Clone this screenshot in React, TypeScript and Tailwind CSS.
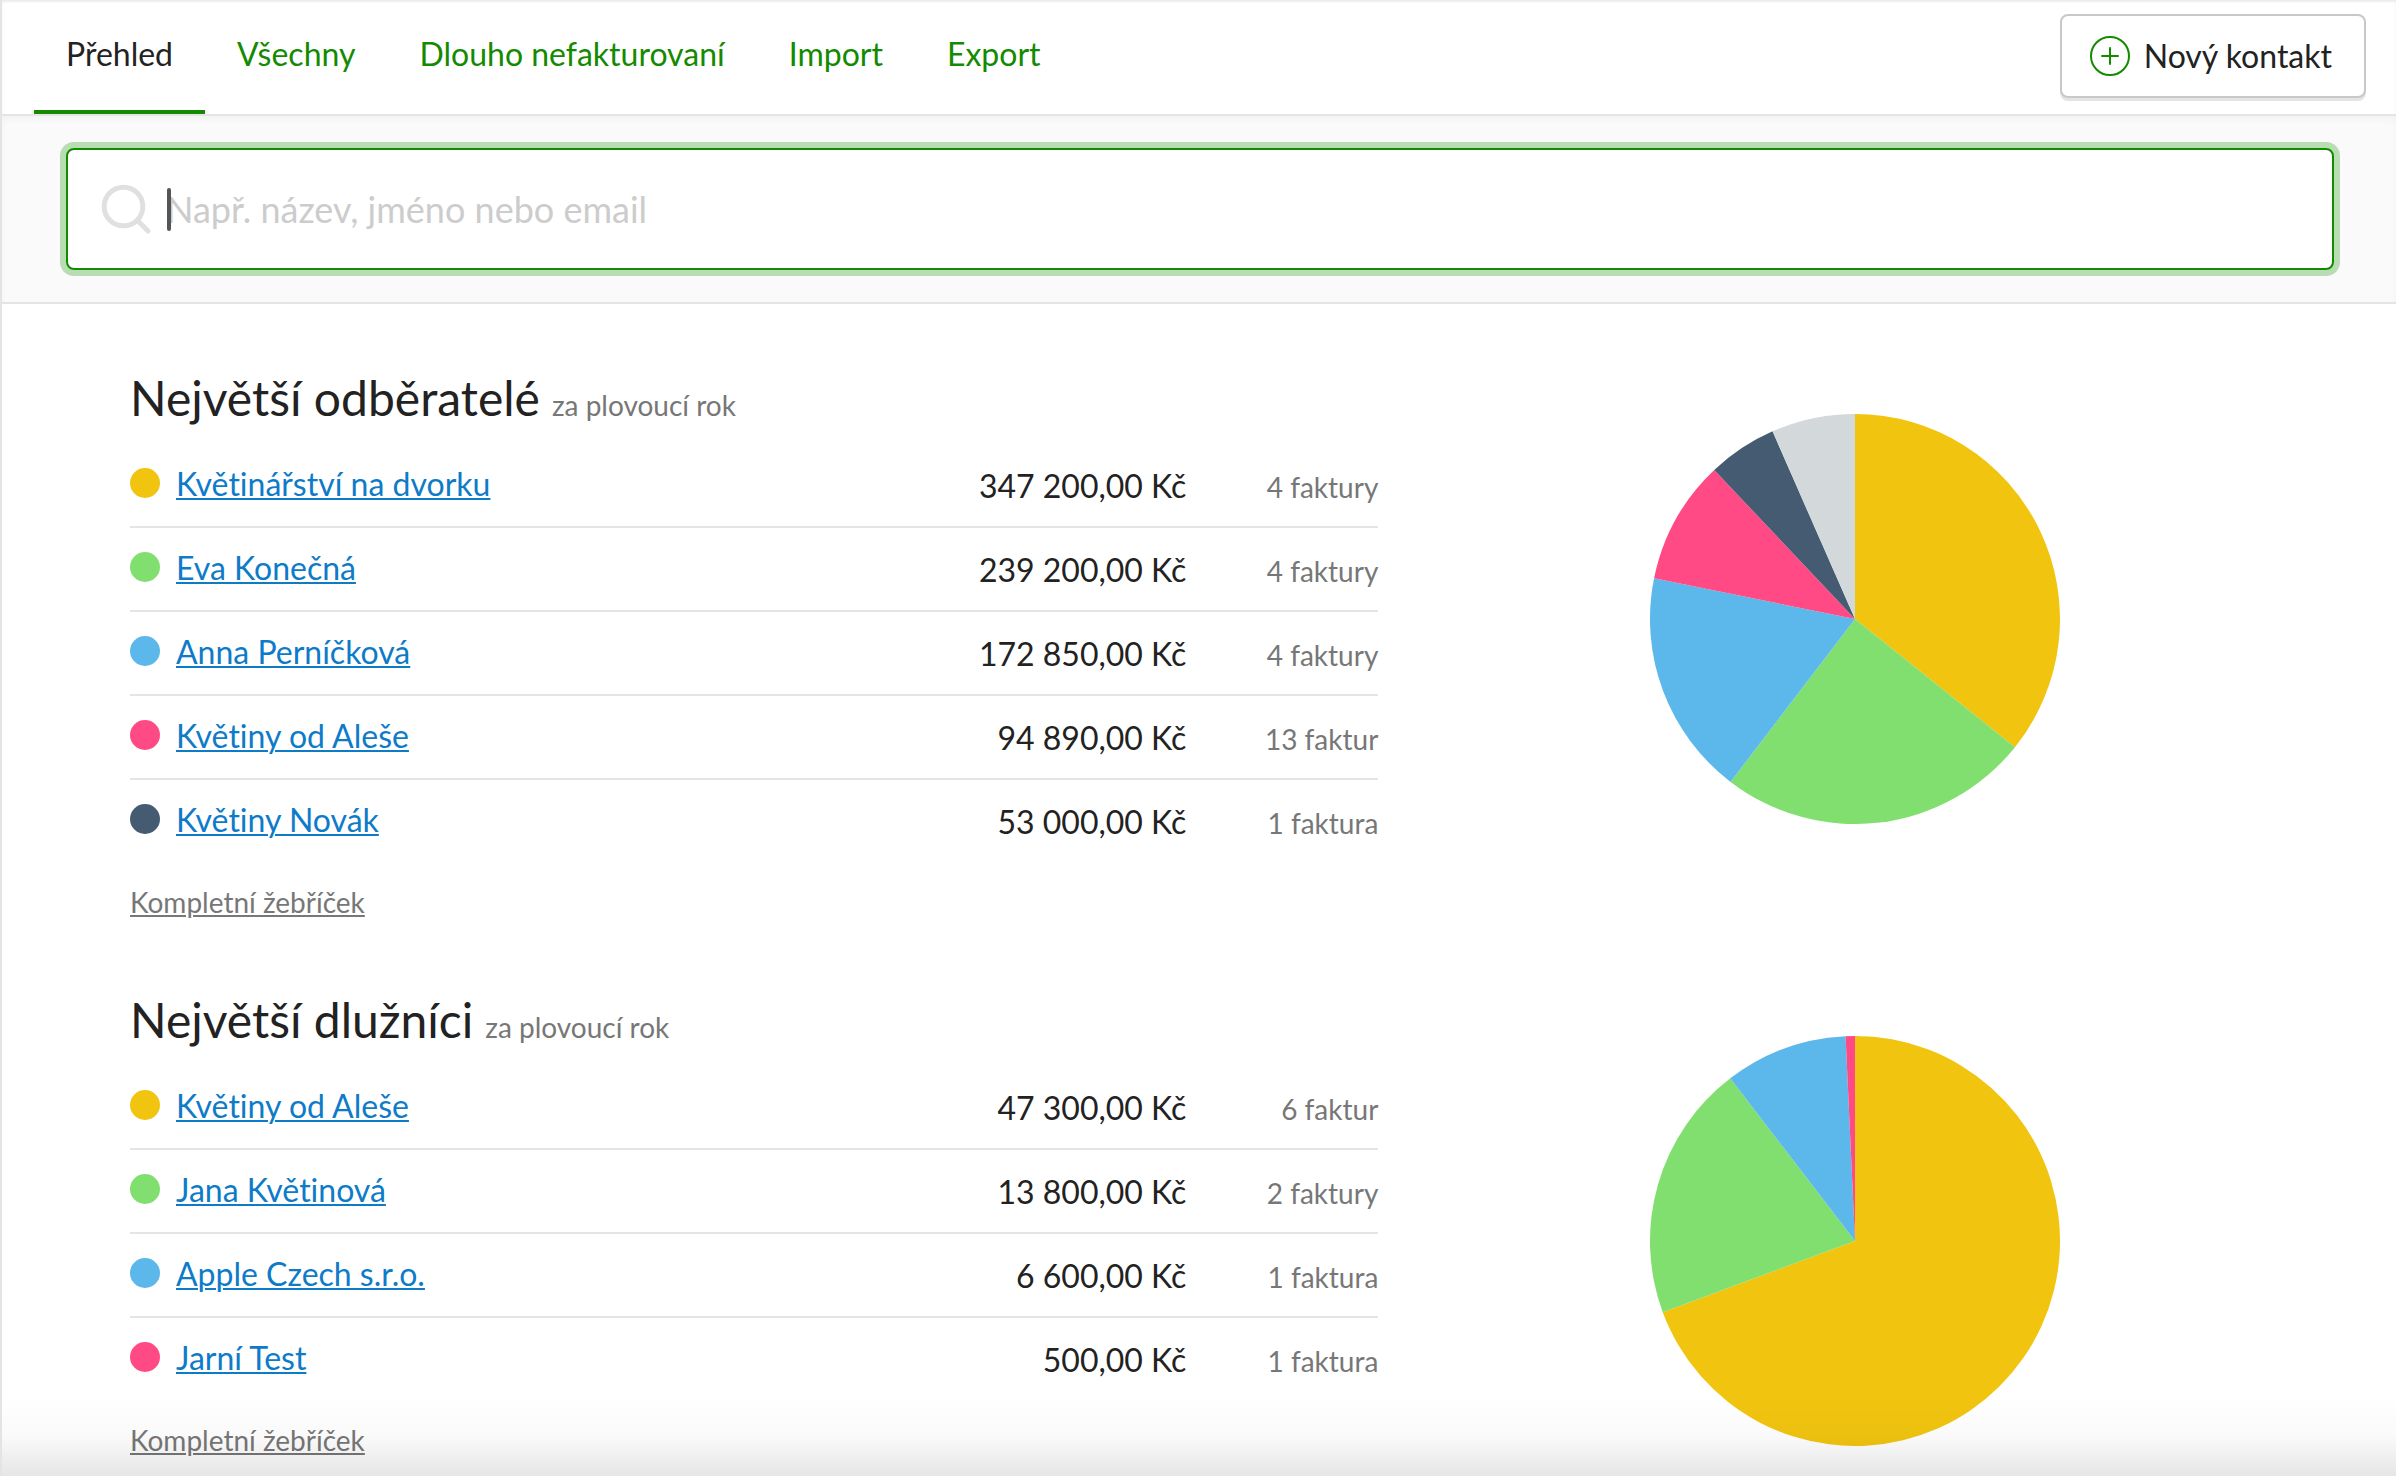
type Row = { name: string; amount: string; value: number; count: string };

const COLORS = ["#f1c40f", "#81df70", "#5cb7ea", "#ff4a85", "#455b71"];
const OTHERS = "#d3d8db";

const TABS = ["Přehled", "Všechny", "Dlouho nefakturovaní", "Import", "Export"];

const CUSTOMERS: Row[] = [
  { name: "Květinářství na dvorku", amount: "347 200,00 Kč", value: 347200, count: "4 faktury" },
  { name: "Eva Konečná", amount: "239 200,00 Kč", value: 239200, count: "4 faktury" },
  { name: "Anna Perníčková", amount: "172 850,00 Kč", value: 172850, count: "4 faktury" },
  { name: "Květiny od Aleše", amount: "94 890,00 Kč", value: 94890, count: "13 faktur" },
  { name: "Květiny Novák", amount: "53 000,00 Kč", value: 53000, count: "1 faktura" },
];

const DEBTORS: Row[] = [
  { name: "Květiny od Aleše", amount: "47 300,00 Kč", value: 47300, count: "6 faktur" },
  { name: "Jana Květinová", amount: "13 800,00 Kč", value: 13800, count: "2 faktury" },
  { name: "Apple Czech s.r.o.", amount: "6 600,00 Kč", value: 6600, count: "1 faktura" },
  { name: "Jarní Test", amount: "500,00 Kč", value: 500, count: "1 faktura" },
];

function Pie({ rows, others, label }: { rows: Row[]; others: number; label: string }) {
  const parts = rows.map((r, i) => ({ value: r.value, color: COLORS[i] }));
  if (others > 0) parts.push({ value: others, color: OTHERS });
  const total = parts.reduce((sum, p) => sum + p.value, 0);
  const radius = 205;
  const point = (v: number) => {
    const a = (v / total) * 2 * Math.PI;
    return `${radius + radius * Math.sin(a)} ${radius - radius * Math.cos(a)}`;
  };
  let from = 0;
  return (
    <svg viewBox="0 0 410 410" className="w-[410px]" role="img" aria-label={label}>
      {parts.map((p) => {
        const to = from + p.value;
        const large = p.value / total > 0.5 ? 1 : 0;
        const d = `M205 205L${point(from)}A205 205 0 ${large} 1 ${point(to)}Z`;
        from = to;
        return <path key={p.color} d={d} fill={p.color} />;
      })}
    </svg>
  );
}

function Ranking({ title, rows, others = 0 }: { title: string; rows: Row[]; others?: number }) {
  return (
    <section className="grid grid-cols-12">
      <div className="col-span-7">
        <h2 className="mb-4 flex items-baseline gap-3 text-[48px] leading-[60px]">
          {title} <small className="text-[28px] leading-8 text-[#777777]">za plovoucí rok</small>
        </h2>
        <table className="w-full border-collapse">
          <tbody>
            {rows.map((row, i) => (
              <tr key={row.name} className="border-b-2 border-[#e4e4e4] align-top last:border-b-0">
                <th scope="row" className="pt-5 text-left font-normal">
                  <span className="flex items-start gap-4">
                    <span className="mt-1 size-[30px] rounded-full" style={{ backgroundColor: COLORS[i] }} />
                    <a href="#" className="text-[32px] leading-10 text-[#0e7bc8] underline decoration-2 underline-offset-2">
                      {row.name}
                    </a>
                  </span>
                </th>
                <td className="pt-[22px] pb-5 text-right text-[32px] leading-10 whitespace-nowrap">{row.amount}</td>
                <td className="w-48 pt-[23px] text-right text-[28px] leading-10 whitespace-nowrap text-[#777777]">{row.count}</td>
              </tr>
            ))}
          </tbody>
        </table>
        <a href="#" className="mt-5 inline-block text-[28px] leading-10 text-[#777777] underline decoration-2 underline-offset-2">
          Kompletní žebříček
        </a>
      </div>
      <div className="col-span-5 flex items-start justify-center pt-[46px] pl-[62px]">
        <Pie rows={rows} others={others} label={title} />
      </div>
    </section>
  );
}

export default function App() {
  return (
    <div className="relative h-screen overflow-hidden border-l-2 border-[#e4e4e4] bg-white font-['Lato',sans-serif] text-[#222222] [font-variant-ligatures:none]">
      <header className="flex items-start justify-between border-b-2 border-[#e4e4e4] pr-[30px] pl-8 shadow-[0_2px_8px_rgba(0,0,0,0.05),inset_0_2px_2px_rgba(0,0,0,0.08)]">
        <nav className="flex">
          {TABS.map((tab, i) => (
            <a
              key={tab}
              href="#"
              aria-current={i === 0 ? "page" : undefined}
              className="border-b-4 border-transparent px-8 pt-[34px] pb-9 text-[32px] leading-10 text-[#148a00] aria-[current=page]:border-[#148a00] aria-[current=page]:text-[#222222]"
            >
              {tab}
            </a>
          ))}
        </nav>
        <button
          type="button"
          className="mt-[14px] flex h-[84px] items-center gap-[14px] rounded-lg border-2 border-[#c8c8c8] bg-white pr-8 pl-7 text-[32px] leading-10 shadow-[0_3px_0_#e4e4e4]"
        >
          <svg viewBox="0 0 40 40" className="size-10" fill="none" stroke="#148a00" strokeWidth="2" strokeLinecap="round" aria-hidden="true">
            <circle cx="20" cy="20" r="19" />
            <path d="M12 20H28M20 12V28" />
          </svg>
          Nový kontakt
        </button>
      </header>

      <div className="border-b-2 border-[#e4e4e4] bg-[#fafafa] py-8 pr-[62px] pl-16 shadow-[inset_0_4px_6px_rgba(0,0,0,0.03)]">
        <label className="relative flex h-[122px] items-center gap-4 rounded-lg border-2 border-[#148a00] bg-white px-[34px] ring-6 ring-[#b8ddb2]">
          <svg viewBox="0 0 48 48" className="size-12 overflow-visible" fill="none" stroke="#e0e0e0" strokeWidth="5" strokeLinecap="round" aria-hidden="true">
            <circle cx="21.5" cy="21.5" r="19.3" />
            <path d="M35.5 35.5L46 46" />
          </svg>
          <span className="absolute left-[99px] h-[43px] w-1 rounded-full bg-[#555555]" />
          <input
            type="search"
            aria-label="Hledat kontakt"
            placeholder="Např. název, jméno nebo email"
            className="flex-1 text-[36px] leading-[44px] outline-none placeholder:text-[#cccccc]"
          />
        </label>
      </div>

      <main className="flex flex-col gap-[68px] pt-16 pr-[126px] pl-32">
        <Ranking title="Největší odběratelé" rows={CUSTOMERS} others={64000} />
        <Ranking title="Největší dlužníci" rows={DEBTORS} />
      </main>

      <div className="pointer-events-none absolute right-0 bottom-0 -left-0.5 h-20 bg-linear-to-b from-black/0 via-black/2 to-black/10" />
    </div>
  );
}
